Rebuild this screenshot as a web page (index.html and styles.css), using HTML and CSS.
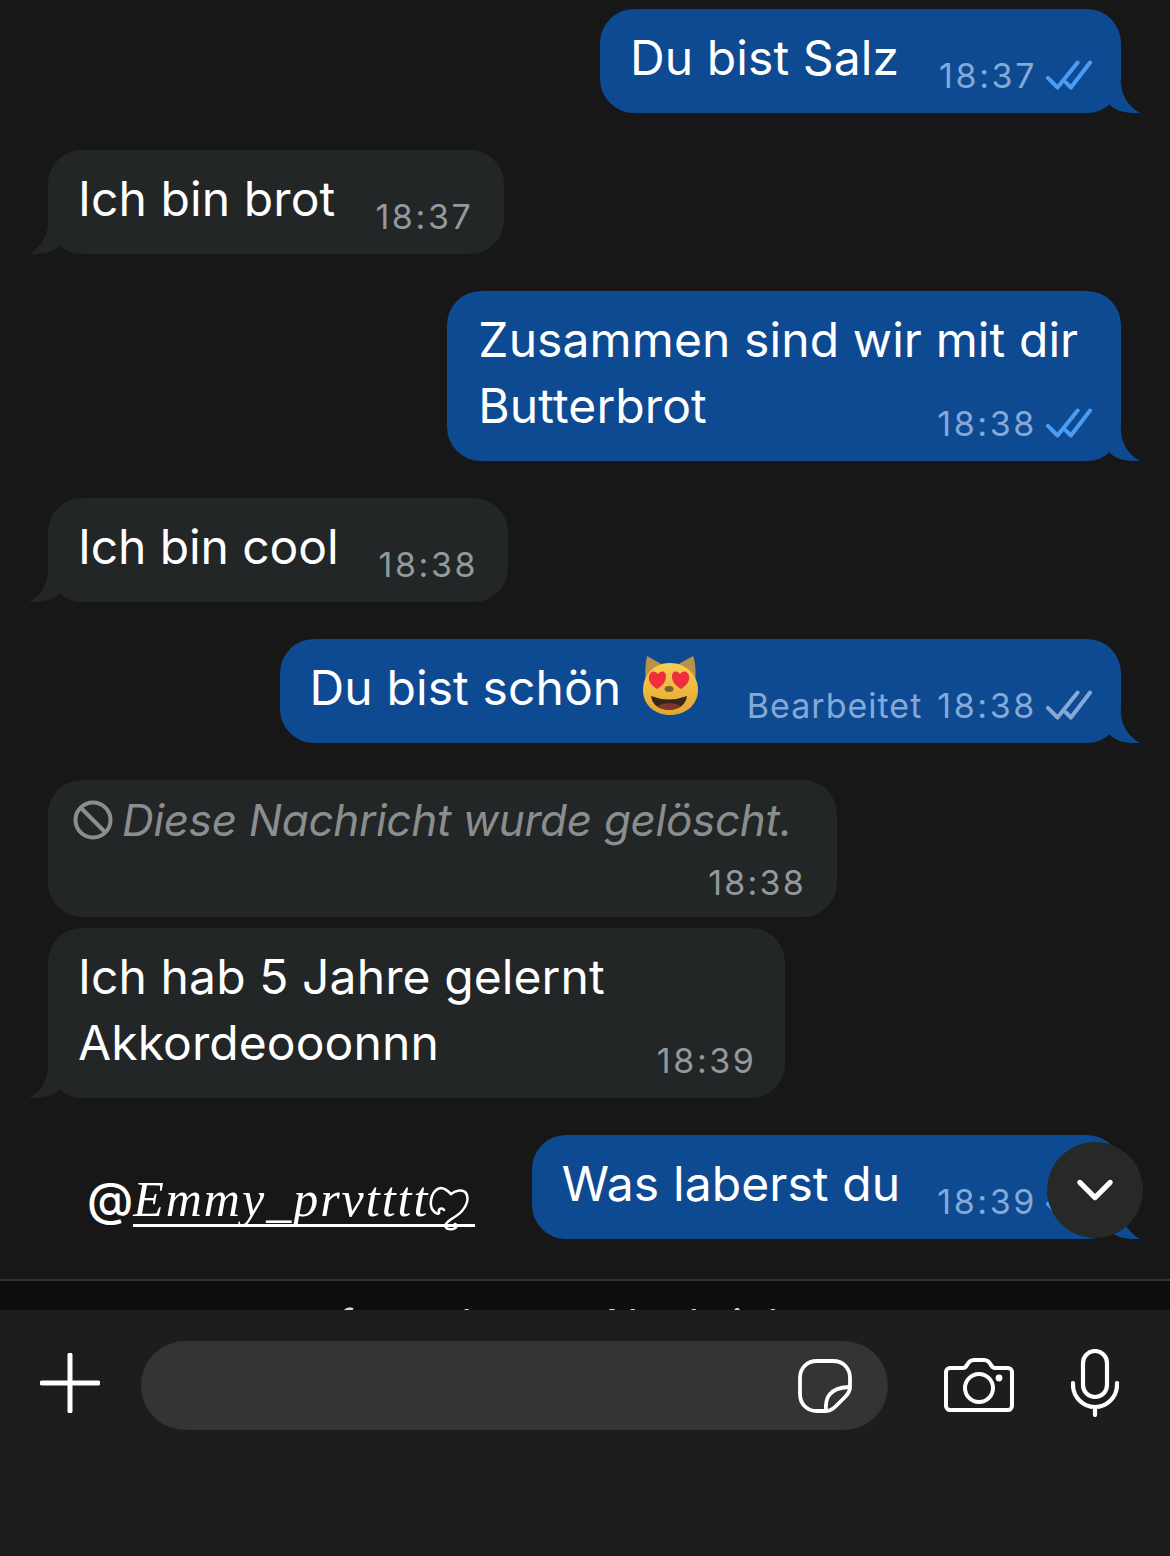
FILE: index.html
```html
<!DOCTYPE html>
<html lang="de">
<head>
    <meta charset="UTF-8">
    <meta name="viewport" content="width=device-width, initial-scale=1.0">
    <title>Chat</title>
    <link rel="stylesheet" href="styles.css">
</head>
<body>
    <svg class="defs" width="0" height="0">
        <symbol id="checks" viewBox="0 0 48 32">
            <path d="M2 18L12 28L33 2M21 23L26 28L46 2" fill="none" stroke="currentColor" stroke-width="4.2" stroke-linecap="round" stroke-linejoin="round"/>
        </symbol>
        <symbol id="tail-out" viewBox="0 0 40 30">
            <path d="M0 0H21C21.5 13 29 24 40 30C29 30.5 17 29 10 22Z" fill="currentColor"/>
        </symbol>
    </svg>

    <main class="chat">
        <div class="bubble out first">
            <p class="text">Du bist Salz</p>
            <div class="meta"><span class="time">18:37</span><svg class="checks read"><use href="#checks"/></svg></div>
            <svg class="tail"><use href="#tail-out"/></svg>
        </div>

        <div class="bubble in">
            <p class="text">Ich bin brot</p>
            <div class="meta"><span class="time">18:37</span></div>
            <svg class="tail"><use href="#tail-out"/></svg>
        </div>

        <div class="bubble out tall">
            <p class="text">Zusammen sind wir mit dir<br>Butterbrot</p>
            <div class="meta"><span class="time">18:38</span><svg class="checks read"><use href="#checks"/></svg></div>
            <svg class="tail"><use href="#tail-out"/></svg>
        </div>

        <div class="bubble in tight">
            <p class="text">Ich bin cool</p>
            <div class="meta"><span class="time">18:38</span></div>
            <svg class="tail"><use href="#tail-out"/></svg>
        </div>

        <div class="bubble out edited-msg">
            <p class="text">Du bist schön
                <svg class="emoji" viewBox="0 0 56 60">
                    <defs>
                        <linearGradient id="catFace" x1="0" y1="0" x2="0" y2="1">
                            <stop offset="0" stop-color="#f7cf52"/>
                            <stop offset="1" stop-color="#e3a52f"/>
                        </linearGradient>
                    </defs>
                    <path d="M4 0L20 9H34L50 0C53 8 53 18 52 26H3C2 18 2 8 4 0Z" fill="#b8924a"/>
                    <path d="M27 7C44 7 55 20 55 34C55 49 42 59 27 59S0 49 0 34C0 20 10 7 27 7Z" fill="url(#catFace)"/>
                    <path d="M14 33C8 29 5 25 6 20C7 15 12 14 15 18C18 14 23 15 23 20C23 26 19 30 14 33Z" fill="#f02e3e"/>
                    <path d="M38 33C33 30 29 26 29 20C29 15 34 14 37 18C40 14 45 15 46 20C47 25 44 29 38 33Z" fill="#f02e3e"/>
                    <ellipse cx="26" cy="33" rx="4.5" ry="3" fill="#7a6038"/>
                    <path d="M8 40Q26 47 44 40C43 49 35 54 26 54S9 49 8 40Z" fill="#35261c"/>
                    <path d="M14 50Q26 44 38 50Q32 54 26 54T14 50Z" fill="#c9443c" opacity=".5"/>
                </svg>
            </p>
            <div class="meta"><span class="edited">Bearbeitet</span><span class="time">18:38</span><svg class="checks"><use href="#checks"/></svg></div>
            <svg class="tail"><use href="#tail-out"/></svg>
        </div>

        <div class="bubble in deleted">
            <p class="text">
                <svg class="no-icon" viewBox="0 0 40 40"><circle cx="20" cy="20" r="17.5"/><path d="M8 8L32 32"/></svg>
                <em>Diese Nachricht wurde gelöscht.</em>
            </p>
            <div class="meta"><span class="time">18:38</span></div>
        </div>

        <div class="bubble in tall next">
            <p class="text">Ich hab 5 Jahre gelernt<br>Akkordeooonnn</p>
            <div class="meta"><span class="time">18:39</span></div>
            <svg class="tail"><use href="#tail-out"/></svg>
        </div>

        <div class="last-row">
            <div class="handle">
                <span class="at">@</span><span class="name">Emmy_prvtttt<svg class="squiggle" viewBox="0 0 44 46"><path d="M15 24C13 21 9 23 10 26C11 29 6 28 3 23C0 16 3 3 12 2C16 2 19 5 22 8C27 4 34 3 37 7C40 12 38 19 33 25C28 31 20 33 17 38C15 42 19 44 24 43C28 42 29 39 26 38" fill="none" stroke="currentColor" stroke-width="2.6" stroke-linecap="round"/></svg></span>
            </div>
            <div class="bubble out">
                <p class="text">Was laberst du</p>
                <div class="meta"><span class="time">18:39</span><svg class="checks read"><use href="#checks"/></svg></div>
                <svg class="tail"><use href="#tail-out"/></svg>
                <button class="scroll-down">
                    <svg viewBox="0 0 40 26"><path d="M4 5L20 21L36 5" fill="none" stroke="currentColor" stroke-width="5.4" stroke-linecap="round" stroke-linejoin="round"/></svg>
                </button>
            </div>
        </div>
    </main>

    <div class="strip"><span>auf anderen Nachricht</span></div>

    <footer class="composer">
        <svg class="plus" viewBox="0 0 60 60"><path d="M30 2V58M2 30H58" stroke="currentColor" stroke-width="5" stroke-linecap="round"/></svg>
        <div class="input">
            <svg class="sticker" viewBox="0 0 54 54"><path d="M19 2H35C45 2 52 9 52 19V28C52 32 50 35 47 38L38 47C35 50 32 52 28 52H19C9 52 2 45 2 35V19C2 9 9 2 19 2Z" fill="none" stroke="currentColor" stroke-width="3.8"/><path d="M28 52C27 40 30 29 51 28" fill="none" stroke="currentColor" stroke-width="3.8"/></svg>
        </div>
        <svg class="camera" viewBox="0 0 70 54"><path d="M6 10H19C21 10 22 9 23 7C25 3 27 2 30 2H40C43 2 45 3 47 7C48 9 49 10 51 10H64C66 10 68 12 68 14V48C68 50 66 52 64 52H6C4 52 2 50 2 48V14C2 12 4 10 6 10Z" fill="none" stroke="currentColor" stroke-width="4" stroke-linejoin="round"/><circle cx="35" cy="30" r="14" fill="none" stroke="currentColor" stroke-width="4"/><circle cx="55" cy="20" r="3.4" fill="currentColor"/></svg>
        <svg class="mic" viewBox="0 0 48 68"><rect x="12" y="2" width="24" height="46" rx="12" fill="none" stroke="currentColor" stroke-width="4.2"/><path d="M2 34V36C2 48 12 58 24 58S46 48 46 36V34M24 58V66" fill="none" stroke="currentColor" stroke-width="4.2" stroke-linecap="round"/></svg>
    </footer>
</body>
</html>
```

FILE: styles.css
```css
* { box-sizing: border-box; }
html, body { margin: 0; padding: 0; }
body { width: 1170px; height: 1556px; overflow: hidden; background: #171717; color: #fff; font-family: Inter, "Noto Sans", sans-serif; display: flex; flex-direction: column; }
p { margin: 0; }
.defs { position: absolute; }

.chat { flex: none; height: 1281px; padding: 9px 49px 0 48px; display: flex; flex-direction: column; align-items: flex-start; gap: 37px; border-bottom: 2px solid #333; }

.bubble { position: relative; display: flex; justify-content: space-between; align-items: flex-end; height: 104px; padding: 0 31px 0 30px; border-radius: 34px; }
.bubble.out { background: #0d4a92; align-self: flex-end; padding-right: 29px; }
.bubble.in { background: #232626; }
.bubble.tall { height: 170px; }
.bubble.out.tall { padding-left: 31px; }
.bubble.next { margin-top: -26px; padding-right: 28px; }
.bubble.tight { padding-right: 30px; }

.text { font-size: 48px; line-height: 66px; align-self: flex-start; padding-top: 16px; white-space: nowrap; letter-spacing: 0.1px; }
.tight .text { letter-spacing: -0.1px; }
.meta { display: flex; align-items: center; gap: 9px; margin-left: 40px; padding-bottom: 15px; font-size: 34px; line-height: 44px; color: #93999c; white-space: nowrap; }
.time { letter-spacing: 2.6px; }
.out .meta { margin-left: 40px; color: #85a9d6; }
.out.tall .meta { margin-left: -141px; }
.in.tall .meta { margin-left: 52px; }
.out.edited-msg .meta { margin-left: 48px; }
.last-row .out .meta { margin-left: 37px; }
.edited { margin-right: 6px; letter-spacing: 1px; }

.checks { width: 46px; height: 32px; color: #85a9d6; }
.checks.read { color: #4a9cf5; }

.tail { position: absolute; bottom: 0; right: -19px; width: 40px; height: 30px; color: #0d4a92; }
.in .tail { right: auto; left: -19px; transform: scaleX(-1); color: #232626; }

.emoji { width: 56px; height: 60px; margin-left: 8px; vertical-align: -11px; }

.deleted { height: 137px; width: 789px; flex-direction: column; padding: 0 31px 0 25px; align-items: stretch; }
.deleted .text { display: flex; align-items: center; gap: 9px; padding-top: 7px; color: #8b8e8e; font-size: 44px; letter-spacing: -0.3px; }
.deleted .meta { justify-content: flex-end; padding-bottom: 12px; margin-left: 0; }
.deleted .time { letter-spacing: 2.2px; }
.no-icon { width: 40px; height: 40px; fill: none; stroke: #8b8e8e; stroke-width: 4; flex: none; }

.last-row { width: 100%; display: flex; justify-content: space-between; align-items: center; }
.handle { display: flex; align-items: baseline; padding-left: 39px; padding-top: 24px; font-size: 50px; line-height: 60px; }
.at { font-family: Inter, sans-serif; font-size: 47px; font-weight: 500; }
.name { display: inline-block; height: 58px; padding-right: 2px; border-bottom: 3px solid #fff; font-family: "Liberation Serif", serif; font-style: italic; letter-spacing: 2px; white-space: nowrap; }
.squiggle { width: 44px; height: 46px; vertical-align: -16px; }

.scroll-down { position: absolute; top: 7px; right: -22px; width: 96px; height: 96px; border: none; border-radius: 50%; background: #272928; color: #fff; display: flex; align-items: center; justify-content: center; padding: 0; }
.scroll-down svg { width: 38px; height: 26px; }

.strip { height: 29px; flex: none; overflow: hidden; background: #0d0d0d; padding-left: 287px; font-size: 44px; line-height: 88px; color: #d8d8d8; white-space: nowrap; word-spacing: 28px; }

.composer { flex: 1; background: #1c1d1d; display: flex; align-items: flex-start; padding: 31px 50px 0 40px; }
.plus { width: 60px; height: 60px; margin-top: 12px; flex: none; color: #fff; }
.input { width: 747px; height: 89px; margin-left: 41px; background: #333535; border-radius: 45px; flex: none; display: flex; align-items: center; justify-content: flex-end; padding-right: 36px; }
.sticker { width: 54px; height: 54px; color: #fff; }
.camera { width: 70px; height: 54px; margin-left: 56px; margin-top: 17px; color: #fff; flex: none; }
.mic { width: 48px; height: 68px; margin-left: 57px; margin-top: 8px; color: #fff; flex: none; }
```
